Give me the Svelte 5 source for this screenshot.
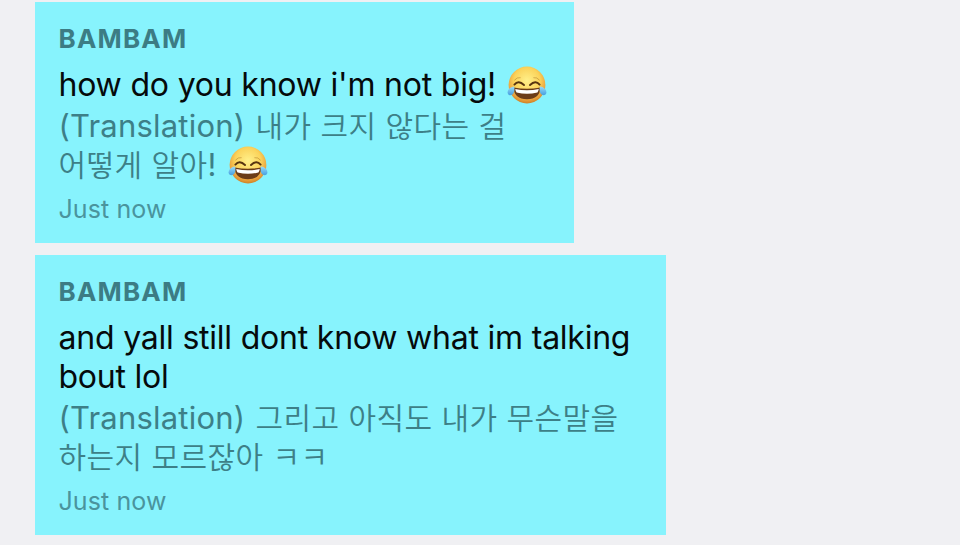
<script lang="ts">
  type Part = { text: string; korean?: boolean } | { emoji: true };

  type Message = {
    name: string;
    width: number;
    lines: Part[][];
    translation: Part[][];
    time: string;
  };

  const messages: Message[] = [
    {
      name: "BAMBAM",
      width: 539,
      lines: [[{ text: "how do you know i'm not big! " }, { emoji: true }]],
      translation: [
        [{ text: "(Translation) " }, { text: "내가 크지 않다는 걸", korean: true }],
        [{ text: "어떻게 알아", korean: true }, { text: "! " }, { emoji: true }],
      ],
      time: "Just now",
    },
    {
      name: "BAMBAM",
      width: 631,
      lines: [
        [{ text: "and yall still dont know what im talking" }],
        [{ text: "bout lol" }],
      ],
      translation: [
        [{ text: "(Translation) " }, { text: "그리고 아직도 내가 무슨말을", korean: true }],
        [{ text: "하는지 모르잖아 ㅋㅋ", korean: true }],
      ],
      time: "Just now",
    },
  ];
</script>

{#snippet joy()}
  <svg class="emoji" viewBox="0 0 40 40" role="img" aria-label="face with tears of joy">
    <defs>
      <radialGradient id="face" cx="0.5" cy="0.38" r="0.64">
        <stop offset="0" stop-color="#fff08a" />
        <stop offset="0.55" stop-color="#fbd35a" />
        <stop offset="0.82" stop-color="#e9a23c" />
        <stop offset="1" stop-color="#c97a22" />
      </radialGradient>
      <linearGradient id="tear" x1="0" y1="0" x2="0" y2="1">
        <stop offset="0" stop-color="#9adcf8" />
        <stop offset="1" stop-color="#459fe0" />
      </linearGradient>
    </defs>
    <circle cx="20" cy="20" r="18.4" fill="url(#face)" />
    <path
      d="M7.6 15Q10 12 13.2 12.6M32.4 15Q30 12 26.8 12.6"
      fill="none"
      stroke="#a06a20"
      stroke-width="0.9"
      stroke-linecap="round"
      opacity="0.5"
    />
    <path
      d="M7.4 19.6Q11.4 14.8 17 20M32.6 19.6Q28.6 14.8 23 20"
      fill="none"
      stroke="#573410"
      stroke-width="1.9"
      stroke-linecap="round"
    />
    <path d="M6.6 22.4Q20 25 33.4 22.4Q32.8 34 20 34.2Q7.2 34 6.6 22.4Z" fill="#6b3c18" />
    <path d="M8.2 24Q20 26.4 31.8 24Q31.4 26 30.4 27.6Q20 30 9.6 27.6Q8.6 26 8.2 24Z" fill="#fff" />
    <path
      d="M7.2 21.4C3.4 21.6 0.6 24.4 0.6 27.5C0.7 30.5 4.3 31.2 6.2 28.8C7.6 26.7 7.6 24 7.2 21.4Z"
      fill="url(#tear)"
    />
    <path
      d="M32.8 21.4C36.6 21.6 39.4 24.4 39.4 27.5C39.3 30.5 35.7 31.2 33.8 28.8C32.4 26.7 32.4 24 32.8 21.4Z"
      fill="url(#tear)"
    />
  </svg>
{/snippet}

{#snippet row(parts: Part[])}
  <div class="line">
    {#each parts as part}{#if "emoji" in part}{@render joy()}{:else}<span class:korean={part.korean}>{part.text}</span>{/if}{/each}
  </div>
{/snippet}

<main class="chat">
  {#each messages as message}
    <article class="message" style="width: {message.width}px">
      <div class="name">{message.name}</div>
      <div class="body">
        {#each message.lines as line}
          {@render row(line)}
        {/each}
      </div>
      <div class="translation">
        {#each message.translation as line}
          {@render row(line)}
        {/each}
      </div>
      <div class="time">{message.time}</div>
    </article>
  {/each}
</main>

<style>
  :global(body) {
    margin: 0;
    background: #f0f0f3;
  }

  .chat {
    box-sizing: border-box;
    height: 545px;
    padding: 2px 0 0 35px;
    display: flex;
    flex-direction: column;
    align-items: flex-start;
    gap: 12px;
    overflow: hidden;
    background: #f0f0f3;
    font-family: Inter, "Noto Sans CJK KR", sans-serif;
  }

  .message {
    box-sizing: border-box;
    padding: 21px 0 18px 23.5px;
    background: #87f3fd;
  }

  .name {
    height: 32px;
    line-height: 32px;
    font-size: 26px;
    font-weight: 700;
    letter-spacing: 1.2px;
    color: #3c7c84;
  }

  .body {
    margin-top: 10px;
    font-size: 32px;
    letter-spacing: -0.25px;
    word-spacing: 0.2px;
    color: #050a0b;
  }

  .line {
    height: 39px;
    line-height: 39px;
    white-space: pre;
  }

  .translation {
    margin-top: 2px;
    font-size: 31px;
    letter-spacing: 0.2px;
    word-spacing: 1.3px;
    color: #3d7f87;
  }

  .korean {
    font-family: "Noto Sans CJK KR", sans-serif;
    font-size: 30px;
    font-weight: 350;
    line-height: 1;
    letter-spacing: 0.4px;
    word-spacing: 1.9px;
  }

  .emoji {
    width: 40px;
    height: 40px;
    margin: -10px 0 -10px 1.5px;
    vertical-align: 1px;
  }

  .time {
    height: 32px;
    margin-top: 9px;
    line-height: 32px;
    font-size: 25px;
    letter-spacing: 0.1px;
    color: #4a949d;
  }
</style>
